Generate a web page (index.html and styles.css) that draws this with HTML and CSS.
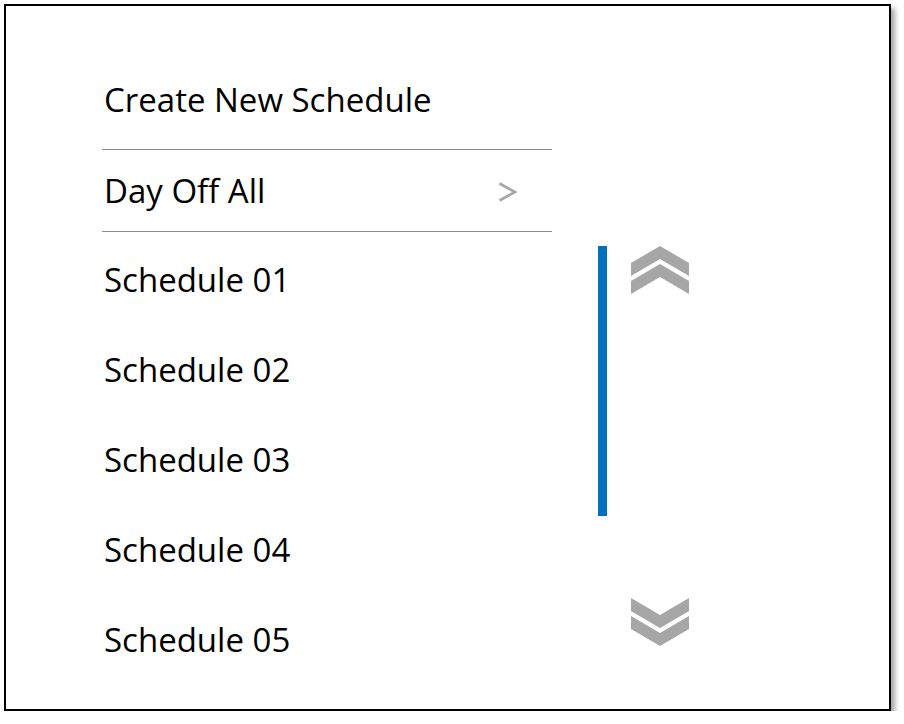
FILE: index.html
```html
<!DOCTYPE html>
<html>
<head>
<meta charset="utf-8">
<link rel="stylesheet" href="styles.css">
</head>
<body>
<div class="frame">
  <div class="list">
    <div class="row">Create New Schedule</div>
    <div class="row row-sep"><span>Day Off All</span>
      <svg class="arrow" width="19" height="20" viewBox="0 0 19 20">
        <polyline points="1.5,1.5 17,10 1.5,18.5" fill="none" stroke="#a6a6a6" stroke-width="2.6"/>
      </svg>
    </div>
    <div class="row">Schedule 01</div>
    <div class="row">Schedule 02</div>
    <div class="row">Schedule 03</div>
    <div class="row">Schedule 04</div>
    <div class="row">Schedule 05</div>
  </div>
  <div class="scroll">
    <div class="bar"></div>
    <div class="nav">
      <svg class="chev" width="58" height="48" viewBox="0 0 58 48">
        <polygon points="0,17 29,0 58,17 58,30 29,13 0,30" fill="#a6a6a6"/>
        <polygon points="0,35 29,18 58,35 58,48 29,31 0,48" fill="#a6a6a6"/>
      </svg>
      <svg class="chev" width="58" height="48" viewBox="0 0 58 48">
        <polygon points="0,0 29,17 58,0 58,13 29,30 0,13" fill="#a6a6a6"/>
        <polygon points="0,18 29,35 58,18 58,31 29,48 0,31" fill="#a6a6a6"/>
      </svg>
    </div>
  </div>
</div>
</body>
</html>
```

FILE: styles.css
```css
html, body {
  margin: 0;
  padding: 0;
  background: #fff;
}
.frame {
  box-sizing: border-box;
  margin: 4px 0 0 4px;
  width: 887px;
  height: 707px;
  border: 2px solid #000;
  box-shadow: 4px 4px 5px rgba(0,0,0,0.35);
  background: #fff;
  display: flex;
  align-items: flex-start;
  padding: 49px 0 0 96px;
  font-family: "Open Sans", "Noto Sans", sans-serif;
  color: #000;
}
.list {
  width: 450px;
  display: flex;
  flex-direction: column;
}
.row {
  height: 90px;
  line-height: 90px;
  font-size: 33px;
  padding-left: 2px;
  white-space: nowrap;
}
.row-sep {
  height: 81px;
  line-height: 81px;
  margin: 4px 0 3px;
  border-top: 1px solid #8c8c8c;
  border-bottom: 1px solid #8c8c8c;
  display: flex;
  justify-content: space-between;
  align-items: center;
}
.arrow {
  display: block;
  margin-right: 35px;
  margin-top: 2px;
}
.scroll {
  display: flex;
  margin: 191px 0 0 46px;
}
.bar {
  width: 9px;
  height: 270px;
  background: #0070c0;
}
.nav {
  margin-left: 24px;
  height: 400px;
  display: flex;
  flex-direction: column;
  justify-content: space-between;
}
.chev {
  display: block;
}
```
